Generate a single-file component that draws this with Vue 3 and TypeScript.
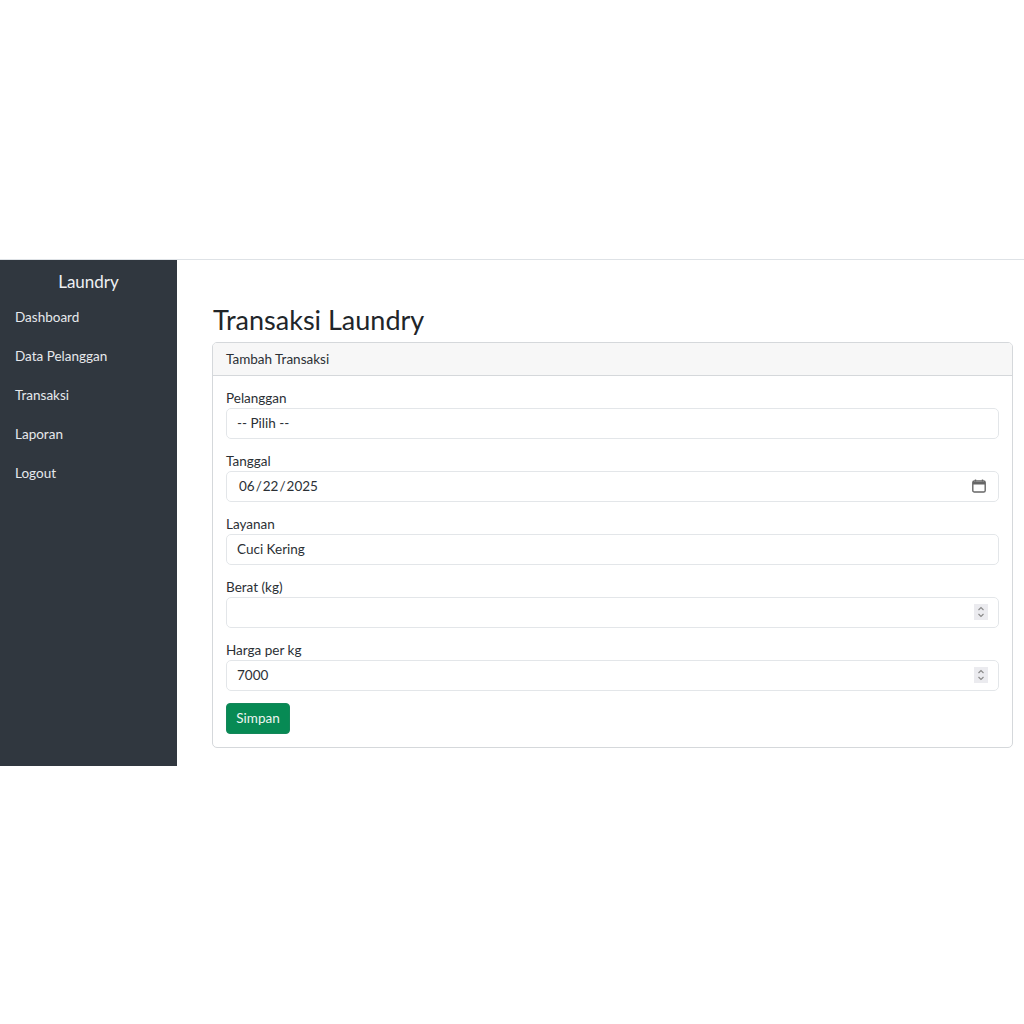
<template>
  <div class="page">
    <div class="shell">
      <aside class="sidebar">
        <h2 class="brand">Laundry</h2>
        <a v-for="item in menu" :key="item" class="nav-link" href="#">{{ item }}</a>
      </aside>
      <main class="content">
        <h1 class="title">Transaksi Laundry</h1>
        <section class="card">
          <header class="card-header">Tambah Transaksi</header>
          <form class="card-body" @submit.prevent>
            <div class="field">
              <label class="label">Pelanggan</label>
              <select class="control">
                <option>-- Pilih --</option>
              </select>
            </div>
            <div class="field">
              <label class="label">Tanggal</label>
              <input class="control" type="date" value="2025-06-22" />
            </div>
            <div class="field">
              <label class="label">Layanan</label>
              <select class="control">
                <option>Cuci Kering</option>
              </select>
            </div>
            <div class="field">
              <label class="label">Berat (kg)</label>
              <input class="control" type="number" />
            </div>
            <div class="field last">
              <label class="label">Harga per kg</label>
              <input class="control" type="number" value="7000" />
            </div>
            <button class="btn" type="submit">Simpan</button>
          </form>
        </section>
      </main>
    </div>
  </div>
</template>

<script setup lang="ts">
const menu: string[] = ['Dashboard', 'Data Pelanggan', 'Transaksi', 'Laporan', 'Logout']
</script>

<style scoped>
.page {
  padding-top: 259px;
  font-family: Lato, "Noto Sans", sans-serif;
  color: #2b3035;
  font-size: 13.5px;
}

.shell {
  display: flex;
  border-top: 1px solid #dee2e6;
  height: 506px;
}

.sidebar {
  width: 177px;
  flex: none;
  background: #30373f;
  color: #eef0f2;
  padding-top: 11px;
  box-sizing: border-box;
}

.brand {
  margin: 0 0 6px;
  font-size: 17px;
  line-height: 22px;
  font-weight: 400;
  text-align: center;
}

.nav-link {
  display: block;
  height: 39px;
  line-height: 37px;
  padding-left: 15px;
  color: #e6e9ec;
  text-decoration: none;
}

.content {
  flex: 1;
  padding: 43px 11px 0 35px;
  min-width: 0;
}

.title {
  margin: 0 0 6px 1px;
  font-size: 27px;
  line-height: 33px;
  font-weight: 400;
  color: #212529;
}

.card {
  border: 1px solid #d5d8db;
  border-radius: 5px;
  height: 406px;
  box-sizing: border-box;
  overflow: hidden;
}

.card-header {
  height: 33px;
  line-height: 32px;
  padding: 0 13px;
  background: #f7f7f7;
  border-bottom: 1px solid #d5d8db;
  box-sizing: border-box;
}

.card-body {
  padding: 13px 13px 0;
}

.field {
  margin-bottom: 13px;
}

.field.last {
  margin-bottom: 12px;
}

.label {
  display: block;
  height: 19px;
  line-height: 19px;
}

.control {
  display: block;
  width: 100%;
  height: 31px;
  padding: 0 10px 2px;
  box-sizing: border-box;
  border: 1px solid #e3e6e9;
  border-radius: 5px;
  background: #fff;
  color: #2b3035;
  font: inherit;
  appearance: none;
  outline: none;
}

.control[type='date'] {
  padding-left: 11px;
}

.control::-webkit-calendar-picker-indicator {
  width: 14px;
  height: 14px;
  margin-right: 2px;
  padding: 0;
  background: url("data:image/svg+xml,%3Csvg xmlns='http://www.w3.org/2000/svg' viewBox='0 0 14 14'%3E%3Cpath d='M3.5 0.5v2M10.5 0.5v2' stroke='%23666' stroke-width='1.4' fill='none'/%3E%3Crect x='0.8' y='2' width='12.4' height='11' rx='1.6' fill='none' stroke='%23666' stroke-width='1.4'/%3E%3Cpath d='M1 3h12v2.6H1z' fill='%23666'/%3E%3C/svg%3E") center / contain no-repeat;
}

.control::-webkit-inner-spin-button {
  appearance: none;
  opacity: 1;
  width: 14px;
  height: 16px;
  margin: 0 0 -2px;
  background: #ebebef url("data:image/svg+xml,%3Csvg xmlns='http://www.w3.org/2000/svg' viewBox='0 0 14 16'%3E%3Cpath d='M4.5 6l2.5-2.5L9.5 6M4.5 10l2.5 2.5L9.5 10' stroke='%23888' stroke-width='1.1' fill='none'/%3E%3C/svg%3E") center / contain no-repeat;
}

.btn {
  display: block;
  width: 64px;
  height: 31px;
  padding: 0 0 2px;
  border: 1px solid #14875a;
  border-radius: 4px;
  background: #078a54;
  color: #eef5f1;
  font: inherit;
}
</style>
